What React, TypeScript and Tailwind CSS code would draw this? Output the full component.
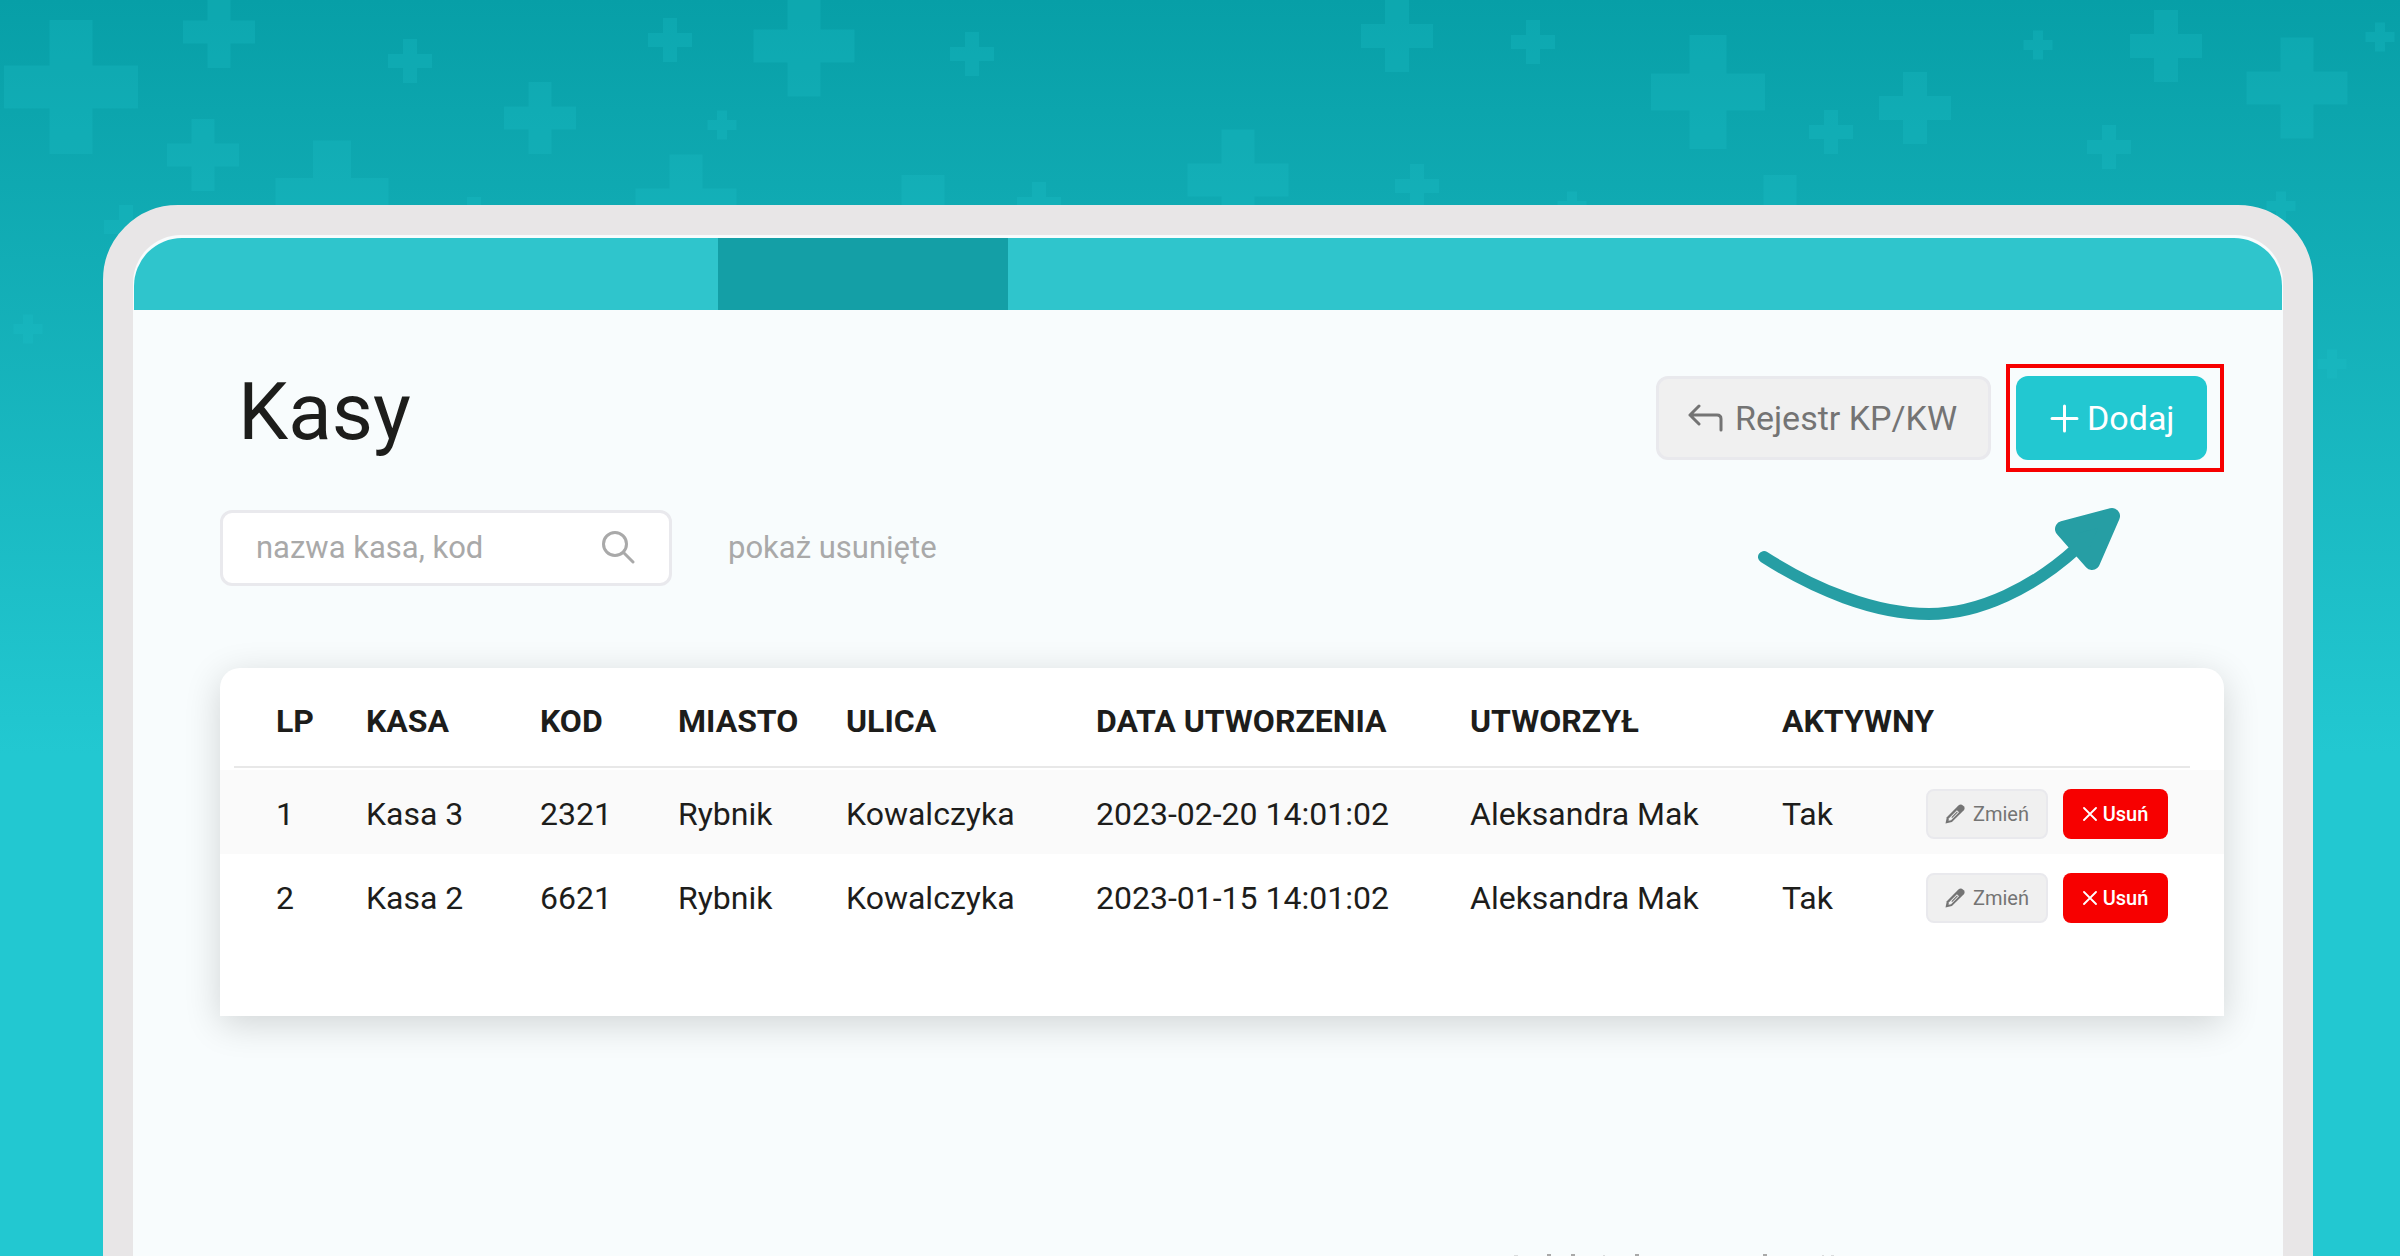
import { ReactNode } from "react";

// centre x, centre y, width, height, arm width
const pluses = [
  [71, 87, 134, 134, 43],
  [219, 32, 72, 72, 23],
  [410, 61, 44, 44, 14],
  [203, 155, 72, 72, 23],
  [332, 197, 113, 113, 38],
  [540, 118, 72, 72, 23],
  [670, 40, 44, 44, 14],
  [804, 46, 101, 101, 33],
  [722, 125, 29, 29, 10],
  [686, 205, 101, 101, 33],
  [126, 227, 44, 44, 14],
  [28, 329, 29, 29, 10],
  [474, 219, 44, 44, 14],
  [972, 54, 44, 44, 14],
  [923, 235, 134, 120, 43],
  [1039, 204, 44, 44, 14],
  [1238, 180, 101, 101, 33],
  [1397, 36, 72, 72, 24],
  [1417, 186, 44, 44, 14],
  [1533, 42, 44, 44, 14],
  [1708, 92, 114, 114, 37],
  [1831, 132, 44, 44, 14],
  [1915, 108, 72, 72, 24],
  [2038, 45, 29, 29, 10],
  [2166, 46, 72, 72, 24],
  [2109, 147, 44, 44, 14],
  [2297, 88, 101, 101, 33],
  [2380, 37, 29, 29, 10],
  [1572, 206, 29, 29, 10],
  [1780, 235, 134, 120, 33],
  [2281, 206, 29, 29, 10],
  [2332, 364, 29, 29, 10],
];

const columns = [
  { name: "LP", width: "w-[90px]" },
  { name: "KASA", width: "w-[174px]" },
  { name: "KOD", width: "w-[138px]" },
  { name: "MIASTO", width: "w-[168px]" },
  { name: "ULICA", width: "w-[250px]" },
  { name: "DATA UTWORZENIA", width: "w-[374px]" },
  { name: "UTWORZYŁ", width: "w-[312px]" },
  { name: "AKTYWNY", width: "w-[142px]" },
];

const rows = [
  ["1", "Kasa 3", "2321", "Rybnik", "Kowalczyka", "2023-02-20 14:01:02", "Aleksandra Mak", "Tak"],
  ["2", "Kasa 2", "6621", "Rybnik", "Kowalczyka", "2023-01-15 14:01:02", "Aleksandra Mak", "Tak"],
];

function Background() {
  return (
    <svg className="absolute inset-0 h-full w-full" viewBox="0 0 2400 1256" preserveAspectRatio="xMidYMin slice" aria-hidden="true">
      <g fill="#1fc0c8" fillOpacity="0.26">
        {pluses.map(([x, y, w, h, arm], i) => {
          const a = arm / 2;
          const l = w / 2;
          const t = h / 2;
          return (
            <path
              key={i}
              d={`M${x - a} ${y - t}H${x + a}V${y - a}H${x + l}V${y + a}H${x + a}V${y + t}H${x - a}V${y + a}H${x - l}V${y - a}H${x - a}Z`}
            />
          );
        })}
      </g>
    </svg>
  );
}

function PencilIcon() {
  return (
    <svg className="size-5" viewBox="0 0 20 20" fill="none" stroke="currentColor" aria-hidden="true">
      <path d="M.5 19.600L1.800 13.200L13.400 1.500C14.800 .2 16.600 .2 17.900 1.400L18.800 2.300C20 3.600 19.900 5.200 18.600 6.500L6.900 18.100Z" fill="currentColor" stroke="none" />
      <path d="M4 14.200L11.900 6.200L14 8.300L6.100 16.200L3.500 16.700Z" fill="#f0f0f0" stroke="none" />
      <path d="M6.800 13.600L12.400 7.900" strokeWidth="1.200" />
    </svg>
  );
}

function SmallButton({ className, children }: { className: string; children: ReactNode }) {
  return (
    <button type="button" className={`flex h-[50px] items-center justify-center rounded-lg text-xl ${className}`}>
      {children}
    </button>
  );
}

function KasyTable() {
  return (
    <div className="mt-[82px] rounded-t-[20px] bg-white pb-[78px] shadow-[0_8px_36px_rgba(0,0,0,0.16)]">
      <table className="w-full table-fixed text-left text-[32px] leading-10">
        <colgroup>
          <col className="w-[56px]" />
          {columns.map((c) => (
            <col key={c.name} className={c.width} />
          ))}
          <col className="w-[300px]" />
        </colgroup>
        <thead>
          <tr className="h-[98px] align-top">
            <td />
            {columns.map((c) => (
              <th key={c.name} scope="col" className="pt-[33px] font-bold whitespace-nowrap">{c.name}</th>
            ))}
            <td />
          </tr>
          <tr>
            <td colSpan={10} className="pr-[34px] pb-[2px] pl-[14px]">
              <div className="h-[2px] bg-[#e8e8e8]" />
            </td>
          </tr>
        </thead>
        <tbody>
          {rows.map((row) => (
            <tr key={row[0]} className="h-[84px] align-top odd:bg-[#fafafa]">
              <td />
              {row.map((cell, i) => (
                <td key={i} className="pt-6 whitespace-nowrap">{cell}</td>
              ))}
              <td className="pt-[19px]">
                <div className="flex justify-end gap-[15px] pr-14">
                  <SmallButton className="w-[122px] gap-2 border-2 border-[#e9e9ed] bg-[#f0f0f0] text-[#747474]">
                    <PencilIcon />
                    Zmień
                  </SmallButton>
                  <SmallButton className="w-[105px] gap-1.5 bg-[#f70000] font-medium text-white">
                    <svg className="size-3.5" viewBox="0 0 14 14" fill="none" stroke="currentColor" strokeWidth="1.800" strokeLinecap="round" aria-hidden="true">
                      <path d="M1 1L13 13M13 1L1 13" />
                    </svg>
                    Usuń
                  </SmallButton>
                </div>
              </td>
            </tr>
          ))}
        </tbody>
      </table>
    </div>
  );
}

export default function App() {
  return (
    <div className="relative h-screen overflow-hidden bg-linear-to-b from-[#079fa7] to-[#22c8d1] to-60% px-[87px] pt-[205px] pl-[103px] font-[Roboto,sans-serif] text-[#1d1d1b]">
      <Background />
      <div className="relative min-h-[1200px] rounded-t-[75px] border-[30px] border-[#e8e6e7] bg-[#e8e6e7]">
        <div className="min-h-[1200px] overflow-hidden rounded-t-[48px] bg-[#f8fcfd] px-px pt-[3px]">
          <nav className="flex h-[72px] overflow-hidden rounded-t-[48px] bg-[#2fc5cc]">
            <div className="ml-[584px] w-[290px] bg-[#149fa6]" />
          </nav>

          <main className="pt-[54px] pr-[58px] pl-[86px]">
            <div className="flex items-start justify-between">
              <h1 className="pl-[18px] text-[80px] leading-[96px]">Kasy</h1>
              <div className="flex">
                <button type="button" className="mt-3 mr-[15px] flex h-[84px] w-[335px] items-center gap-3 rounded-xl border-[3px] border-[#e9e9ed] bg-[#f0f0f0] pl-[28px] text-[34px] text-[#747474]">
                  <svg className="h-7 w-9" viewBox="0 0 36 28" fill="none" stroke="currentColor" strokeWidth="3" strokeLinecap="round" strokeLinejoin="round" aria-hidden="true">
                    <path d="M12 2L3 11L12 20M3 11H30Q34 11 34 15V26" />
                  </svg>
                  Rejestr KP/KW
                </button>
                <div className="border-4 border-[#f70000] py-2 pr-[13px] pl-1.5">
                  <button type="button" className="flex h-[84px] w-[191px] items-center gap-2 rounded-xl bg-[#22c8d1] pl-[34px] text-[34px] text-white">
                    <svg className="size-[29px]" viewBox="0 0 29 29" fill="none" stroke="currentColor" strokeWidth="3" strokeLinecap="round" aria-hidden="true">
                      <path d="M14.500 2V27M2 14.500H27" />
                    </svg>
                    Dodaj
                  </button>
                </div>
              </div>
            </div>

            <div className="relative mt-[38px] flex items-center">
              <label className="flex h-[76px] w-[452px] items-center rounded-xl border-[3px] border-[#e9e9ed] bg-white pr-[34px] pl-[33px]">
                <input type="text" aria-label="nazwa kasa, kod" placeholder="nazwa kasa, kod" className="min-w-0 flex-1 bg-transparent text-[31px] outline-none placeholder:text-[#a9a9a9]" />
                <svg className="size-[34px]" viewBox="0 0 34 34" fill="none" stroke="#a9a9a9" strokeWidth="3" strokeLinecap="round" aria-hidden="true">
                  <circle cx="14" cy="13" r="11.500" />
                  <path d="M22.500 21.500L32 31" />
                </svg>
              </label>
              <a href="#usuniete" className="ml-[56px] text-[31px] text-[#a9a9a9]">pokaż usunięte</a>
              <svg className="absolute -top-2 right-[98px] h-[120px] w-[372px]" viewBox="0 0 372 120" fill="none" stroke="#269ea4" strokeLinecap="round" strokeLinejoin="round" aria-hidden="true">
                <path d="M10 55C60 87 120 112 175 112C226 112 280 85 322 47" strokeWidth="12" />
                <path d="M358 14L309 27L338 60Z" fill="#269ea4" strokeWidth="16" />
              </svg>
            </div>

            <KasyTable />
          </main>
        </div>
      </div>

      {/* tips of the strokes that start under the fold */}
      <svg className="absolute right-[560px] bottom-0 h-[2px] w-[330px]" viewBox="0 0 330 2" fill="#a9a9a9" aria-hidden="true">
        <path d="M37 0H41V2H37ZM61 0H65V2H61ZM125 0H129V2H125ZM253 0H257V2H253Z" />
        <path d="M4 1H8V2H4ZM93 1H95V2H93ZM312 1H314V2H312ZM321 1H324V2H321Z" fillOpacity="0.4" />
      </svg>
    </div>
  );
}
